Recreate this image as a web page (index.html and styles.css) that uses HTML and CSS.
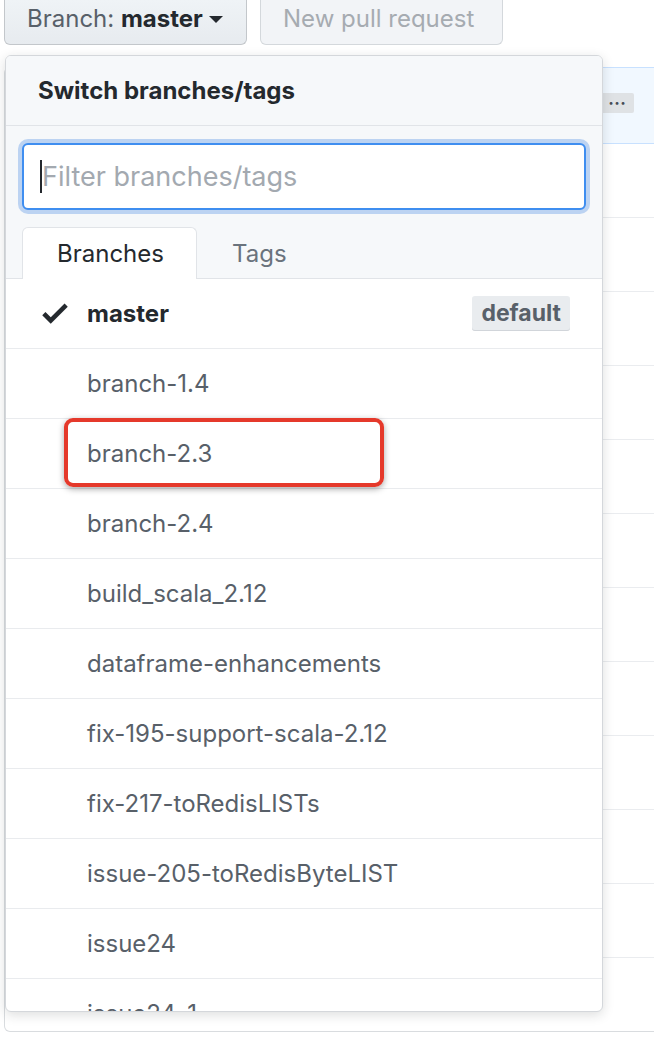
FILE: index.html
```html
<!DOCTYPE html>
<html>
<head>
<meta charset="utf-8">
<link rel="stylesheet" href="styles.css">
</head>
<body>
<div class="stage">
  <div class="topbar">
    <button class="btn btn-branch"><span class="lbl">Branch:</span>&nbsp;<b>master</b><span class="caret"></span></button>
    <button class="btn btn-disabled">New pull request</button>
  </div>

  <div class="filebox">
    <div class="commit-tease">
      <span class="ellipsis">&bull;&bull;&bull;</span>
    </div>
    <div class="filerow"></div>
    <div class="filerow"></div>
    <div class="filerow"></div>
    <div class="filerow"></div>
    <div class="filerow"></div>
    <div class="filerow"></div>
    <div class="filerow"></div>
    <div class="filerow"></div>
    <div class="filerow"></div>
    <div class="filerow"></div>
    <div class="filerow"></div>
    <div class="filerow"></div>
  </div>

  <div class="menu">
    <div class="menu-header">Switch branches/tags</div>
    <div class="menu-filter">
      <div class="filter-input"><span class="cursor"></span><span class="placeholder">Filter branches/tags</span></div>
      <div class="tabs">
        <div class="tab active">Branches</div>
        <div class="tab">Tags</div>
      </div>
    </div>
    <div class="menu-list">
      <div class="item selected">
        <svg class="check" viewBox="0 0 12 16" width="26" height="34"><path d="M12 5l-8 8-4-4 1.5-1.5L4 10l6.5-6.5L12 5z" fill="#24292e"/></svg>
        <span class="name">master</span>
        <span class="badge">default</span>
      </div>
      <div class="item"><span class="name">branch-1.4</span></div>
      <div class="item"><span class="name">branch-2.3</span><span class="annot"></span></div>
      <div class="item"><span class="name">branch-2.4</span></div>
      <div class="item"><span class="name">build_scala_2.12</span></div>
      <div class="item"><span class="name">dataframe-enhancements</span></div>
      <div class="item"><span class="name">fix-195-support-scala-2.12</span></div>
      <div class="item"><span class="name">fix-217-toRedisLISTs</span></div>
      <div class="item"><span class="name">issue-205-toRedisByteLIST</span></div>
      <div class="item"><span class="name">issue24</span></div>
      <div class="item"><span class="name">issue24-1</span></div>
    </div>
  </div>
</div>
</body>
</html>
```

FILE: styles.css
```css
* { box-sizing: border-box; }
html, body { margin: 0; padding: 0; background: #fff; overflow: hidden; }
body {
  font-family: Inter, "Liberation Sans", sans-serif;
  color: #24292e;
  width: 654px;
  height: 1038px;
}
.stage { position: relative; width: 654px; height: 1038px; }

.topbar {
  display: flex;
  gap: 13px;
  padding-left: 4px;
  height: 45px;
}
.btn {
  height: 45px;
  border: 1px solid #c3c7cb;
  border-top: 0;
  border-radius: 0 0 6px 6px;
  font-family: inherit;
  font-size: 24px;
  padding: 0 22px 8px;
  display: flex;
  align-items: center;
  background: linear-gradient(#eff3f6, #e7ebef);
  color: #586069;
}
.btn-branch { width: 243px; }
.btn-branch b { color: #24292e; font-weight: 700; }
.caret {
  width: 0; height: 0;
  border-left: 7px solid transparent;
  border-right: 7px solid transparent;
  border-top: 7px solid #24292e;
  margin-left: 6px;
  margin-top: 2px;
}
.btn-disabled {
  width: 243px;
  background: #f2f4f7;
  border-color: #d4d8dc;
  color: #a6abb1;
}

.filebox {
  margin-top: 22px;
  margin-left: 4px;
  width: 666px;
  border: 1px solid #d9dcdf;
  border-top-color: #c8e1ff;
  border-radius: 6px;
}
.commit-tease {
  height: 76px;
  background: #f1f8ff;
  border-bottom: 1px solid #c8e1ff;
  border-radius: 6px 6px 0 0;
  display: flex;
  justify-content: flex-end;
  align-items: flex-start;
  padding: 25px 35px 0 0;
}
.ellipsis {
  width: 34px;
  height: 20px;
  background: #dfe2e5;
  border-radius: 2px;
  font-size: 9px;
  line-height: 20px;
  color: #444d56;
  text-align: center;
  letter-spacing: 1px;
  padding-left: 1px;
}
.filerow {
  height: 74px;
  border-bottom: 1px solid #eaecef;
}
.filerow:last-child { border-bottom: 0; height: 73px; }

.menu {
  position: absolute;
  left: 5px;
  top: 55px;
  width: 598px;
  height: 957px;
  background: #fff;
  border: 1px solid #d4d7db;
  border-radius: 6px;
  box-shadow: 0 3px 12px rgba(27, 31, 35, 0.15);
  overflow: hidden;
}
.menu-header {
  height: 70px;
  background: #f6f8fa;
  border-bottom: 1px solid #e1e4e8;
  padding-left: 32px;
  display: flex;
  align-items: center;
  font-size: 24px;
  font-weight: 700;
  color: #24292e;
}
.menu-filter {
  background: #f6f8fa;
  padding: 17px 16px 0;
  border-bottom: 1px solid #e1e4e8;
}
.filter-input {
  height: 67px;
  background: #fff;
  border: 2px solid #3f8ef0;
  border-radius: 6px;
  box-shadow: 0 0 0 4px #bcd3f2;
  display: flex;
  align-items: center;
  padding-left: 16px;
  font-size: 27px;
}
.cursor {
  width: 2px;
  height: 33px;
  background: #24292e;
  margin-right: 0;
}
.placeholder { color: #a3a9b0; }
.tabs {
  display: flex;
  margin-top: 17px;
  align-items: flex-end;
}
.tab {
  height: 51px;
  padding: 0 35px;
  display: flex;
  align-items: center;
  font-size: 24px;
  color: #6a737d;
  margin-bottom: -1px;
}
.tab.active {
  width: 175px;
  padding: 0 0 0 34px;
  background: #fff;
  border: 1px solid #e1e4e8;
  border-bottom: 0;
  border-radius: 6px 6px 0 0;
  color: #24292e;
  height: 52px;
}

.item {
  position: relative;
  height: 70px;
  border-bottom: 1px solid #e9ebee;
  display: flex;
  align-items: center;
  padding-left: 81px;
  padding-right: 32px;
  font-size: 24px;
  color: #586069;
}
.item.selected { color: #24292e; font-weight: 700; }
.check {
  position: absolute;
  left: 36px;
  top: 17px;
}
.name { flex: 1; }
.badge {
  background: #e9ecef;
  color: #586069;
  font-weight: 700;
  font-size: 23px;
  padding: 0 9px;
  height: 35px;
  line-height: 35px;
  border-radius: 3px;
  box-shadow: inset 0 -1px 0 #d1d5da;
}
.annot {
  position: absolute;
  left: 58px;
  top: -1px;
  width: 320px;
  height: 69px;
  border: 4px solid #e5392b;
  border-radius: 9px;
  box-shadow: 0 2px 6px rgba(0, 0, 0, 0.35);
}
```
